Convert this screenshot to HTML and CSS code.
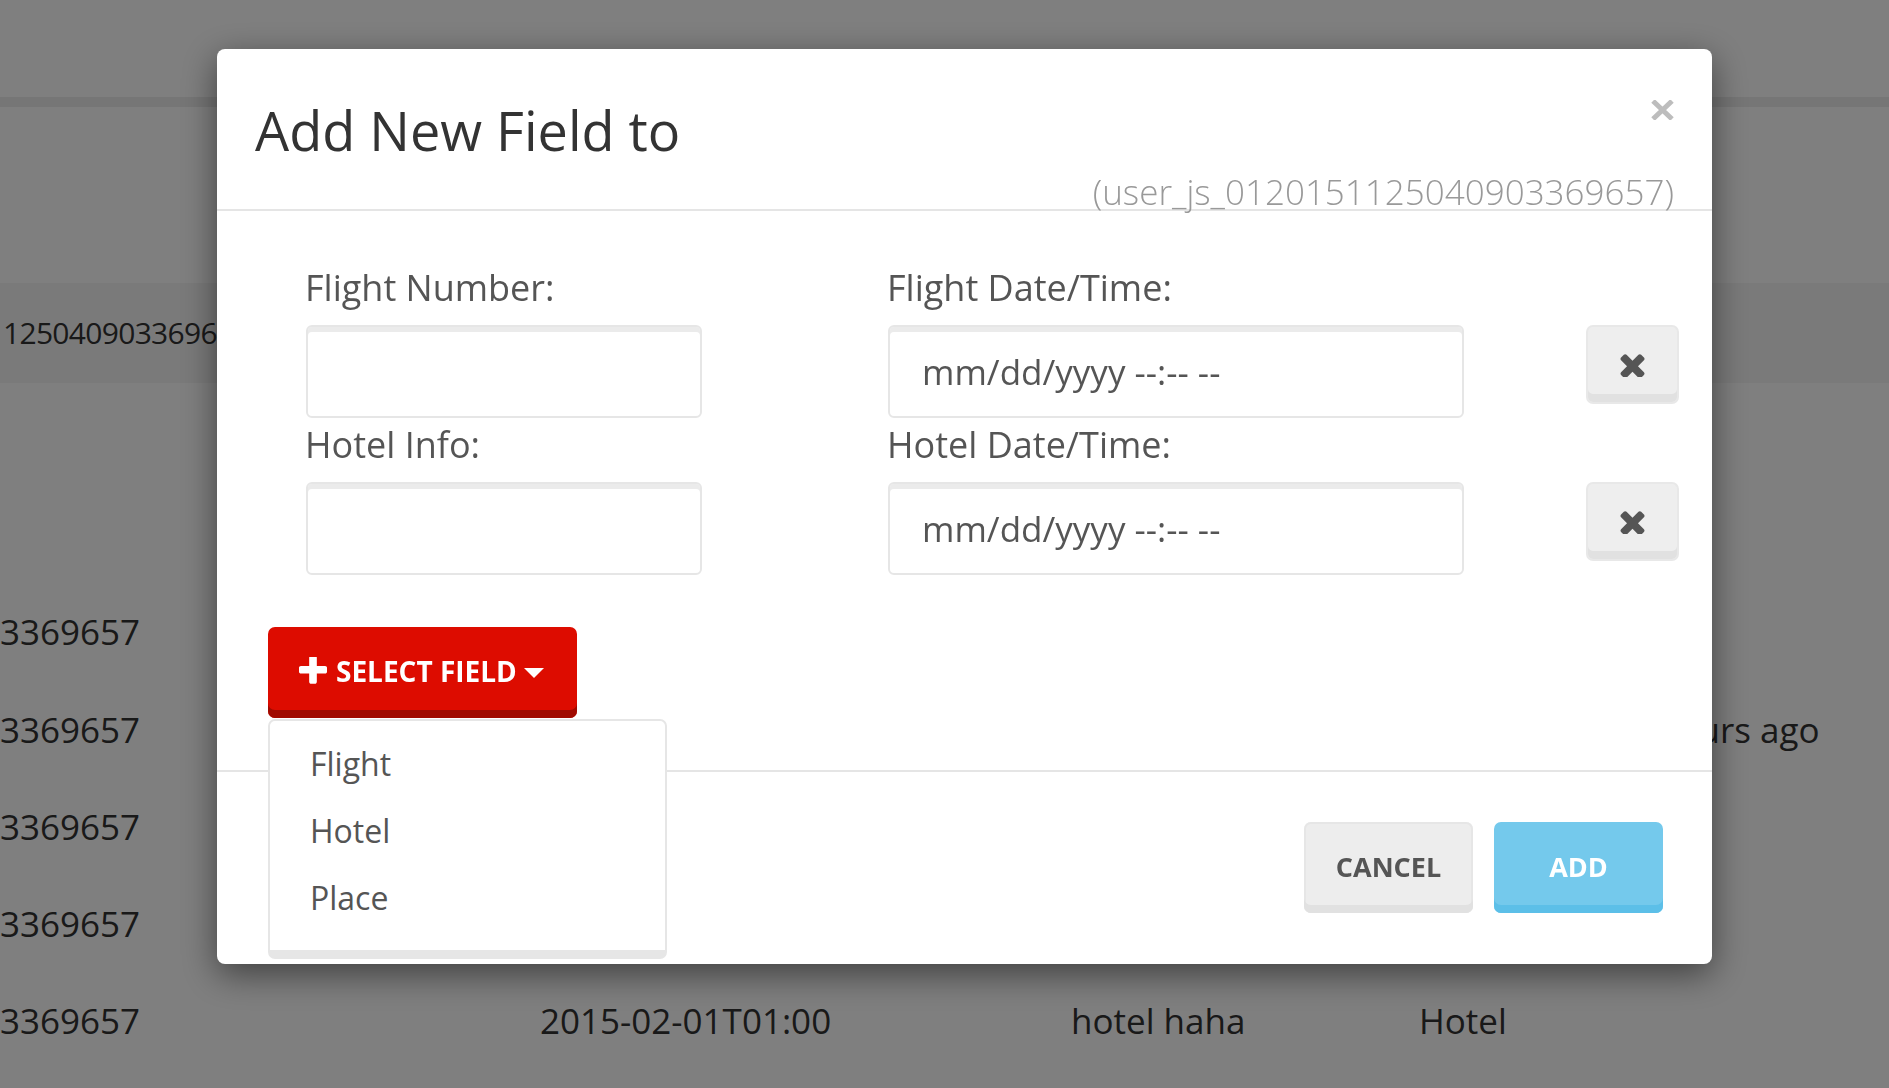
FILE: index.html
```html
<!DOCTYPE html>
<html lang="en">
<head>
<meta charset="utf-8">
<title>Add New Field</title>
<link rel="stylesheet" href="styles.css">
</head>
<body>
<div class="page">
  <div class="topbar"></div>
  <div class="toprule"></div>
  <div class="spacer"></div>
  <div class="band-row"><span class="band-text">125040903369657</span></div>
  <div class="rows">
    <div class="row"></div>
    <div class="row"></div>
    <div class="row"><span class="cell c-id">3369657</span></div>
    <div class="row"><span class="cell c-id-wide">3369657</span><span class="cell">hours ago</span></div>
    <div class="row"><span class="cell c-id">3369657</span></div>
    <div class="row"><span class="cell c-id">3369657</span></div>
    <div class="row"><span class="cell c-id">3369657</span><span class="cell c-date">2015-02-01T01:00</span><span class="cell c-info">hotel haha</span><span class="cell">Hotel</span></div>
  </div>
</div>

<div class="overlay">
  <div class="modal">
    <div class="modal-header">
      <div class="title-row">
        <h4 class="modal-title">Add New Field to</h4>
        <button class="close" type="button" aria-label="Close">
          <svg viewBox="0 0 23 20" width="23" height="20"><path d="M2 1 L21 19 M21 1 L2 19" stroke="#bdbdbd" stroke-width="5" fill="none"/></svg>
        </button>
      </div>
      <div class="subid">(user_js_0120151125040903369657)</div>
    </div>

    <div class="modal-body">
      <div class="fields">
        <div class="field-row">
          <div class="field narrow">
            <label>Flight Number:</label>
            <input class="input" type="text">
          </div>
          <div class="field wide">
            <label>Flight Date/Time:</label>
            <input class="input date" type="text" placeholder="mm/dd/yyyy --:-- --">
          </div>
          <button class="remove" type="button" aria-label="Remove">
            <svg viewBox="302 302 1188 1188" width="25" height="24"><path fill="#555" d="M1490 1322q0 40-28 68l-136 136q-28 28-68 28t-68-28l-294-294-294 294q-28 28-68 28t-68-28l-136-136q-28-28-28-68t28-68l294-294-294-294q-28-28-28-68t28-68l136-136q28-28 68-28t68 28l294 294 294-294q28-28 68-28t68 28l136 136q28 28 28 68t-28 68l-294 294 294 294q28 28 28 68z"/></svg>
          </button>
        </div>
        <div class="field-row">
          <div class="field narrow">
            <label>Hotel Info:</label>
            <input class="input" type="text">
          </div>
          <div class="field wide">
            <label>Hotel Date/Time:</label>
            <input class="input date" type="text" placeholder="mm/dd/yyyy --:-- --">
          </div>
          <button class="remove" type="button" aria-label="Remove">
            <svg viewBox="302 302 1188 1188" width="25" height="24"><path fill="#555" d="M1490 1322q0 40-28 68l-136 136q-28 28-68 28t-68-28l-294-294-294 294q-28 28-68 28t-68-28l-136-136q-28-28-28-68t28-68l294-294-294-294q-28-28-28-68t28-68l136-136q28-28 68-28t68 28l294 294 294-294q28-28 68-28t68 28l136 136q28 28 28 68t-28 68l-294 294 294 294q28 28 28 68z"/></svg>
          </button>
        </div>
      </div>

      <div class="select-wrap">
        <button class="select-btn" type="button">
          <svg class="plus" viewBox="192 192 1408 1408" width="28" height="28"><path fill="#fff" d="M1600 736v192q0 40-28 68t-68 28h-416v416q0 40-28 68t-68 28h-192q-40 0-68-28t-28-68v-416h-416q-40 0-68-28t-28-68v-192q0-40 28-68t68-28h416v-416q0-40 28-68t68-28h192q40 0 68 28t28 68v416h416q40 0 68 28t28 68z"/></svg>
          <span class="select-label">SELECT FIELD</span>
          <span class="caret"></span>
        </button>
        <ul class="menu">
          <li>Flight</li>
          <li>Hotel</li>
          <li>Place</li>
        </ul>
      </div>
    </div>

    <div class="modal-footer">
      <button class="btn btn-cancel" type="button">CANCEL</button>
      <button class="btn btn-add" type="button">ADD</button>
    </div>
  </div>
</div>
</body>
</html>
```

FILE: styles.css
```css
* { box-sizing: border-box; }

html, body {
  margin: 0;
  height: 100%;
}

body {
  font-family: "Open Sans", "Noto Sans", sans-serif;
  background: #fff;
  color: #333;
  overflow: hidden;
}

/* background page */
.page {
  width: 1889px;
  height: 1088px;
  overflow: hidden;
}

.topbar { height: 97px; }

.toprule {
  height: 10px;
  background: #ececec;
}

.spacer { height: 176px; }

.band-row {
  height: 100px;
  background: #f5f5f5;
  font-size: 30px;
  line-height: 100px;
  white-space: nowrap;
  overflow: hidden;
}

.band-text {
  display: inline-block;
  margin-left: 3px;
  letter-spacing: -0.7px;
}

.rows { margin-top: 6px; }

.row {
  display: flex;
  height: 97.2px;
  line-height: 97.2px;
  font-size: 35px;
  white-space: nowrap;
}

.cell { flex: none; }
.c-id { width: 540px; }
.c-id-wide { width: 1656px; }
.c-date { width: 531px; }
.c-info { width: 348px; }

/* overlay + modal */
.overlay {
  position: fixed;
  inset: 0;
  background: rgba(0, 0, 0, 0.5);
}

.modal {
  width: 1495px;
  margin: 49px 0 0 217px;
  background: #fff;
  border-radius: 8px;
  box-shadow: 0 10px 35px rgba(0, 0, 0, 0.5);
}

.modal-header {
  padding: 51px 38px 0 38px;
  border-bottom: 2px solid #e5e5e5;
}

.title-row {
  display: flex;
  justify-content: space-between;
  align-items: flex-start;
}

.modal-title {
  margin: 0;
  font-size: 54px;
  font-weight: 400;
  line-height: 60px;
  color: #333;
}

.close {
  display: block;
  width: 23px;
  height: 20px;
  padding: 0;
  border: none;
  background: none;
}

.close svg { display: block; }

.subid {
  margin-top: 11px;
  text-align: right;
  font-size: 35px;
  font-weight: 300;
  line-height: 38px;
  color: #999;
  white-space: nowrap;
  position: relative;
  top: 2px;
}

.modal-body {
  padding: 55px 0 52px 51px;
}

.fields { margin-left: 38px; }

.field-row {
  display: flex;
  align-items: flex-start;
}

.field-row + .field-row { margin-top: 5px; }

.field.narrow { width: 396px; }

.field.wide {
  width: 576px;
  margin-left: 186px;
}

.field label {
  display: block;
  font-size: 36px;
  line-height: 44px;
  color: #555;
  margin: 0 0 15px -1px;
}

.input {
  display: block;
  width: 100%;
  height: 93px;
  margin: 0;
  padding: 0 0 0 32px;
  border: 2px solid #e6e6e6;
  border-radius: 6px;
  box-shadow: inset 0 5px 0 #ebebeb;
  background: #fff;
  font-family: "Open Sans", "Noto Sans", sans-serif;
  font-size: 35px;
  color: #555;
  outline: none;
}

.input::placeholder {
  color: #555;
  opacity: 1;
}

.remove {
  flex: none;
  display: flex;
  align-items: center;
  justify-content: center;
  width: 93px;
  height: 79px;
  margin: 59px 0 0 122px;
  padding: 0;
  border: 2px solid #e8e8e8;
  border-radius: 7px;
  background: #eeeeee;
  box-shadow: inset 0 -8px 0 #e1e1e1;
}

.remove svg { display: block; }

/* select field button + menu */
.select-wrap {
  position: relative;
  width: 309px;
  margin-top: 52px;
}

.select-btn {
  display: flex;
  align-items: center;
  width: 309px;
  height: 91px;
  padding: 0 0 3px 31px;
  border: none;
  border-radius: 7px;
  background: #dd0c00;
  box-shadow: inset 0 -8px 0 #a00a00;
  color: #fff;
  font-family: "Open Sans", "Noto Sans", sans-serif;
  font-size: 28px;
  font-weight: 700;
  white-space: nowrap;
}

.plus {
  display: block;
  flex: none;
  margin-right: 9px;
}

.caret {
  flex: none;
  width: 0;
  height: 0;
  margin-left: 7px;
  margin-top: 4px;
  border-top: 10px solid #fff;
  border-left: 10px solid transparent;
  border-right: 10px solid transparent;
}

.menu {
  position: absolute;
  left: 0;
  top: 92px;
  width: 399px;
  height: 240px;
  margin: 0;
  padding: 9px 0 0;
  list-style: none;
  background: #fff;
  border: 2px solid #e6e6e6;
  border-bottom-width: 9px;
  border-radius: 7px;
}

.menu li {
  padding-left: 40px;
  font-size: 32px;
  line-height: 67px;
  color: #555;
}

/* footer */
.modal-footer {
  display: flex;
  justify-content: flex-end;
  gap: 21px;
  padding: 50px 49px 51px;
  border-top: 2px solid #e5e5e5;
}

.btn {
  width: 169px;
  height: 91px;
  padding: 0 0 2px;
  border: none;
  border-radius: 7px;
  font-family: "Open Sans", "Noto Sans", sans-serif;
  font-size: 27px;
  font-weight: 700;
}

.btn-cancel {
  background: #ededed;
  color: #555;
  box-shadow: inset 0 -8px 0 #e1e1e1, inset 0 0 0 2px #e6e6e6;
}

.btn-add {
  background: #74c9ec;
  color: #fff;
  box-shadow: inset 0 -8px 0 #5cbfe8;
}
```
